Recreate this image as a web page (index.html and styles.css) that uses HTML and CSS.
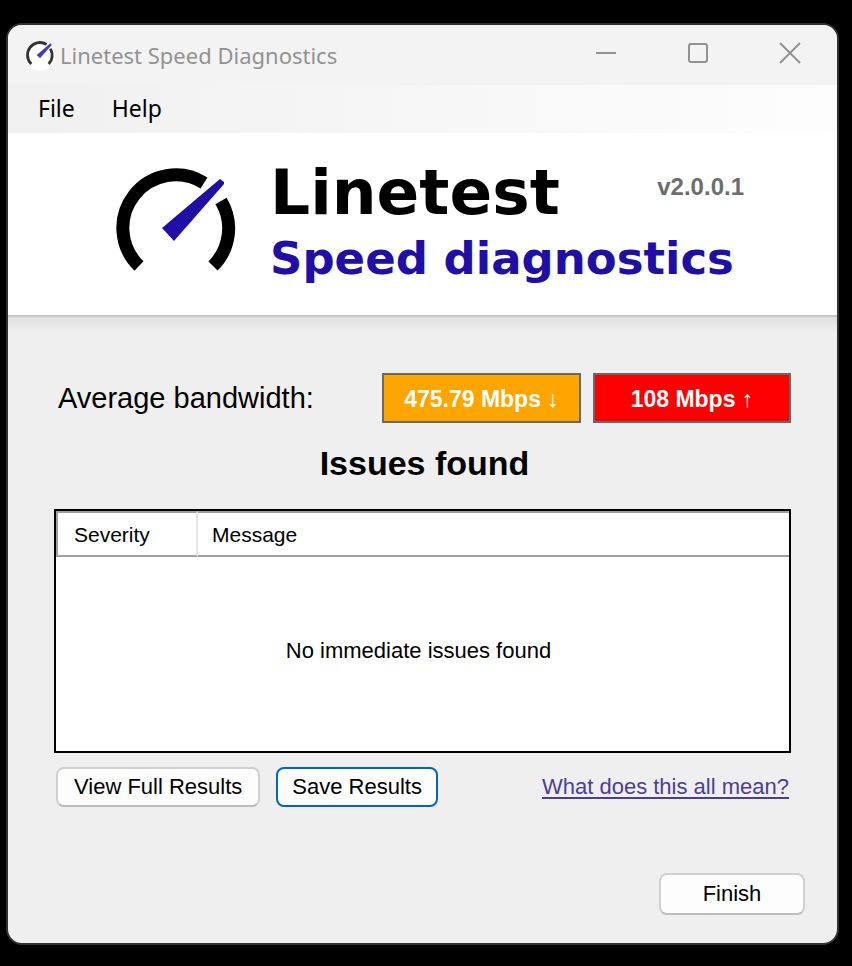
FILE: index.html
```html
<!DOCTYPE html>
<html lang="en">
<head>
  <meta charset="UTF-8" />
  <meta name="viewport" content="width=device-width, initial-scale=1.0"/>
  <title>Linetest Speed Diagnostics</title>
  <link rel="stylesheet" href="styles.css">
</head>
<body>
  <div class="window">
    <header class="titlebar">
      <svg class="app-icon" viewBox="-8 -8 136 136" aria-hidden="true">
        <circle cx="60" cy="64" r="64" fill="#fff"/>
        <g fill="none" stroke="#333" stroke-width="12">
          <path d="M23 98A53 53 0 0 1 88 15"/>
          <path d="M104 33A53 53 0 0 1 97 98"/>
        </g>
        <path d="M46 60L60 74L110 18L104 10Z" fill="#4a3cb0"/>
      </svg>
      <span class="title">Linetest Speed Diagnostics</span>
      <div class="controls">
        <button type="button" aria-label="Minimize">
          <svg viewBox="0 0 22 22"><path d="M1 11H21"/></svg>
        </button>
        <button type="button" aria-label="Maximize">
          <svg viewBox="0 0 22 22"><rect x="2" y="2" width="18" height="18" rx="2"/></svg>
        </button>
        <button type="button" aria-label="Close">
          <svg viewBox="0 0 22 22"><path d="M1 1L21 21M21 1L1 21"/></svg>
        </button>
      </div>
    </header>

    <nav class="menu">
      <button type="button">File</button>
      <button type="button">Help</button>
    </nav>

    <section class="banner">
      <svg class="logo" viewBox="0 0 120 104" aria-hidden="true">
        <g fill="none" stroke="#000" stroke-width="13">
          <path d="M23 98A53 53 0 0 1 88 15"/>
          <path d="M105 33A53 53 0 0 1 97 98"/>
        </g>
        <path d="M46 60L58 73L108 16L108 14L104 11Z" fill="#200fa6"/>
      </svg>
      <h1>Linetest <span>Speed diagnostics</span></h1>
      <span class="version">v2.0.0.1</span>
    </section>

    <main class="content">
      <div class="bandwidth">
        <span class="label">Average bandwidth:</span>
        <span class="speed down">475.79 Mbps ↓</span>
        <span class="speed up">108 Mbps ↑</span>
      </div>

      <h2>Issues found</h2>

      <table class="issues">
        <thead>
          <tr><th class="severity">Severity</th><th>Message</th></tr>
        </thead>
        <tbody>
          <tr><td colspan="2">No immediate issues found</td></tr>
        </tbody>
      </table>

      <div class="actions">
        <button type="button" class="btn">View Full Results</button>
        <button type="button" class="btn focused">Save Results</button>
        <a href="#help">What does this all mean?</a>
      </div>
    </main>

    <footer class="footer">
      <button type="button" class="btn finish">Finish</button>
    </footer>
  </div>
</body>
</html>
```

FILE: styles.css
```css
* {
  box-sizing: border-box;
}

body {
  margin: 0;
  min-height: 100vh;
  padding: 23px 13px 21px 6px;
  display: flex;
  background: #000;
  color: #000;
  font-family: "Liberation Sans", Arial, sans-serif;
  font-size: 22px;
}

button {
  font: inherit;
  color: inherit;
}

.window {
  flex: 1;
  display: flex;
  flex-direction: column;
  background: #efefef;
  border: 2px solid #303132;
  border-radius: 16px;
  overflow: hidden;
}

/* title bar */
.titlebar {
  display: flex;
  align-items: center;
  height: 60px;
  padding-left: 16px;
  background: #f3f3f3;
}

.app-icon {
  width: 32px;
  height: 32px;
}

.title {
  margin-left: 4px;
  color: #929292;
  font-family: "Noto Sans", sans-serif;
  font-size: 22px;
}

.controls {
  display: flex;
  margin-left: auto;
  padding-right: 1px;
}

.controls button {
  width: 92px;
  height: 60px;
  padding: 0 0 4px;
  border: none;
  background: none;
}

.controls svg {
  display: block;
  width: 22px;
  height: 22px;
  margin: auto;
  fill: none;
  stroke: #929292;
  stroke-width: 2;
}

/* menu */
.menu {
  display: flex;
  gap: 13px;
  height: 48px;
  padding-left: 18px;
  background: linear-gradient(to right, #f0f0f0, #fdfdfd);
}

.menu button {
  padding: 0 12px 2px;
  border: none;
  background: none;
  font-family: "Noto Sans", sans-serif;
  font-size: 23px;
}

/* banner */
.banner {
  display: flex;
  align-items: flex-start;
  height: 184px;
  padding: 24px 92px 0 108px;
  background: #fff;
  border-bottom: 2px solid #c8c8c8;
}

.logo {
  width: 120px;
  height: 104px;
  margin-top: 11px;
}

.banner h1 {
  margin: 0 0 0 34px;
  font-family: "DejaVu Sans", Verdana, sans-serif;
  font-size: 63px;
  line-height: 72px;
  white-space: nowrap;
}

.banner h1 span {
  display: block;
  color: #200fa6;
  font-size: 45px;
  line-height: 60px;
}

/* sits over the empty right side of the heading */
.version {
  position: absolute;
  right: 108px;
  top: 173px;
  color: #6d6d6d;
  font-size: 24px;
  font-weight: bold;
}

/* content */
.content {
  padding: 56px 46px 0;
  background: linear-gradient(#dfdfdf, #efefef 14px);
}

.bandwidth {
  display: grid;
  grid-template-columns: 1fr 199px 198px;
  gap: 12px;
  align-items: center;
}

.label {
  padding-left: 4px;
  font-size: 29px;
}

.speed {
  height: 50px;
  border: 2px solid #696969;
  color: #fff;
  font-size: 23px;
  font-weight: bold;
  line-height: 48px;
  text-align: center;
  white-space: nowrap;
}

.down {
  background: #ffa500;
}

.up {
  background: #ff0000;
}

.content h2 {
  margin: 20px 0 25px;
  padding-left: 4px;
  font-size: 34px;
  line-height: 41px;
  text-align: center;
}

.issues {
  width: 100%;
  border: 2px solid #000;
  border-spacing: 0;
  background: #fff;
}

.issues th {
  height: 46px;
  padding: 2px 14px 0;
  border-top: 2px solid #a0a0a0;
  border-bottom: 2px solid #a0a0a0;
  font-size: 21px;
  font-weight: normal;
  text-align: left;
}

.issues .severity {
  width: 142px;
  padding-left: 16px;
  border-left: 2px solid #a0a0a0;
  border-right: 2px solid #e5e5e5;
}

.issues td {
  height: 194px;
  padding: 0 8px 6px 0;
  text-align: center;
}

.actions {
  display: flex;
  align-items: center;
  gap: 16px;
  margin-top: 14px;
  padding: 0 2px;
}

.btn {
  height: 40px;
  padding: 0 16px;
  border: 2px solid #d0d0d0;
  border-bottom-color: #bcbcbc;
  border-radius: 8px;
  background: #fdfdfd;
}

.focused {
  padding: 0 14px;
  border-color: #0067c0;
}

.actions a {
  margin-left: auto;
  color: #4c3f92;
  text-decoration-thickness: 2px;
  text-underline-offset: 3px;
}

.footer {
  display: flex;
  justify-content: flex-end;
  margin-top: auto;
  padding: 0 32px 28px;
}

.finish {
  width: 146px;
  height: 42px;
}
```
